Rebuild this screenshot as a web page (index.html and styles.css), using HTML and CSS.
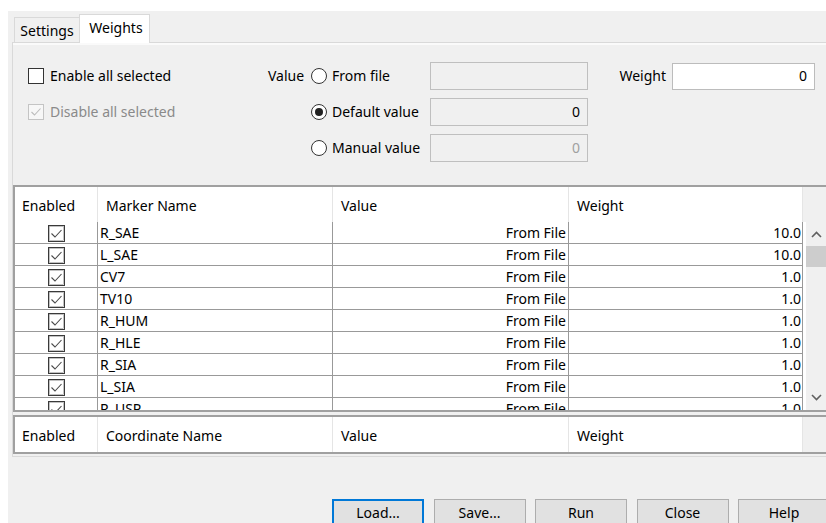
FILE: index.html
```html
<!DOCTYPE html>
<html>
<head>
<meta charset="utf-8">
<title>Weights</title>
<link rel="stylesheet" href="styles.css">
</head>
<body>
<div class="window">
  <div class="tabbar">
    <div class="tab">Settings</div>
    <div class="tab active">Weights</div>
  </div>

  <div class="pane">
    <div class="controls">
      <label class="check">
        <span class="box"></span>
        <span>Enable all selected</span>
      </label>
      <div class="value-label">Value</div>
      <label class="radio"><span class="dot"></span><span>From file</span></label>
      <div class="field disabled"></div>
      <div class="spacer"></div>
      <div class="weight-label">Weight</div>
      <div class="field weight">0</div>

      <label class="check disabled row2">
        <span class="box">
          <svg width="14" height="14" viewBox="0 0 14 14"><polyline points="2.5,7 5.5,10 11.5,3.5" fill="none" stroke="#bcbcbc" stroke-width="1.1"/></svg>
        </span>
        <span>Disable all selected</span>
      </label>
      <label class="radio row2 col3"><span class="dot on"></span><span>Default value</span></label>
      <div class="field row2 col4">0</div>

      <label class="radio row3 col3"><span class="dot"></span><span>Manual value</span></label>
      <div class="field disabled row3 col4">0</div>
    </div>

    <div class="table markers">
      <div class="thead">
        <div class="th c1">Enabled</div>
        <div class="th c2">Marker Name</div>
        <div class="th c3">Value</div>
        <div class="th c4">Weight</div>
        <div class="th fill"></div>
      </div>
      <div class="tbody">
        <div class="rows" id="rows"></div>
        <div class="gutter"></div>
        <div class="vscroll">
          <svg class="arrow" width="21" height="22" viewBox="0 0 21 22"><polyline points="6,15 10.5,10.5 15,15" fill="none" stroke="#606060" stroke-width="1.6"/></svg>
          <div class="thumb"></div>
          <div class="track"></div>
          <svg class="arrow" width="21" height="22" viewBox="0 0 21 22"><polyline points="6,7 10.5,11.5 15,7" fill="none" stroke="#606060" stroke-width="1.6"/></svg>
        </div>
      </div>
    </div>

    <div class="table coords">
      <div class="thead">
        <div class="th c1">Enabled</div>
        <div class="th c2">Coordinate Name</div>
        <div class="th c3">Value</div>
        <div class="th c4">Weight</div>
        <div class="th fill"></div>
      </div>
    </div>
  </div>

  <div class="buttons">
    <button class="btn default">Load...</button>
    <button class="btn">Save...</button>
    <button class="btn">Run</button>
    <button class="btn">Close</button>
    <button class="btn">Help</button>
  </div>
</div>
<script src="app.js"></script>
</body>
</html>
```

FILE: app.js
```js
// Marker rows of the weights table
const markers = [
  ["R_SAE", "10.0"], ["L_SAE", "10.0"], ["CV7", "1.0"], ["TV10", "1.0"],
  ["R_HUM", "1.0"], ["R_HLE", "1.0"], ["R_SIA", "1.0"], ["L_SIA", "1.0"],
  ["R_USP", "1.0"]
];

const tick =
  '<svg width="17" height="17" viewBox="0 0 17 17">' +
  '<rect x="0.5" y="0.5" width="16" height="16" fill="#fff" stroke="#3a3a3a" stroke-width="1"/>' +
  '<rect x="1.5" y="1.5" width="14" height="14" fill="none" stroke="#9a9a9a" stroke-width="0.6"/>' +
  '<polyline points="3.5,8.5 7,12 13.5,5" fill="none" stroke="#4a4a4a" stroke-width="1.1"/>' +
  '</svg>';

const rows = document.getElementById("rows");
rows.innerHTML = markers.map(([name, w]) =>
  '<div class="tr">' +
  '<div class="td c1">' + tick + '</div>' +
  '<div class="td c2">' + name + '</div>' +
  '<div class="td c3 num">From File</div>' +
  '<div class="td c4 num">' + w + '</div>' +
  '</div>'
).join("");
```

FILE: styles.css
```css
* { box-sizing: border-box; }

html, body {
  margin: 0;
  background: #fff;
}

body {
  font-family: "Noto Sans", "Open Sans", sans-serif;
  font-size: 14px;
  color: #000;
}

.window {
  margin: 11px 0 0 8px;
  width: 818px;
  height: 512px;
  background: #f0f0f0;
  overflow: hidden;
}

/* ---- tabs ---- */
.tabbar {
  height: 31px;
  display: flex;
  align-items: flex-end;
  padding-left: 6px;
}

.tab {
  height: 25px;
  width: 66px;
  border: 1px solid #d9d9d9;
  border-bottom: none;
  background: #f0f0f0;
  display: flex;
  align-items: center;
  justify-content: center;
}

.tab.active {
  width: 71px;
  height: 29px;
  margin-left: -1px;
  margin-bottom: -1px;
  background: #fff;
  position: relative;
  z-index: 1;
  padding-left: 3px;
  padding-bottom: 3px;
}

/* ---- tab page ---- */
.pane {
  margin-left: 4px;
  width: 830px;
  height: 415px;
  border: 1px solid #d9d9d9;
  box-shadow: inset 0 2px 0 #fafafa;
  padding: 15px 0 2px 0;
}

.controls {
  display: grid;
  grid-template-columns: 240px 43px 119px 158px 31px 53px 143px;
  grid-template-rows: repeat(3, 36px);
  padding-left: 15px;
  align-items: center;
}

.row2 { grid-row: 2; }
.row3 { grid-row: 3; }
.col3 { grid-column: 3; }
.col4 { grid-column: 4; }
.check.row2 { grid-column: 1; }

.check, .radio {
  display: flex;
  align-items: center;
  white-space: nowrap;
  margin-top: -1px;
}

.check .box {
  width: 16px;
  height: 16px;
  border: 1px solid #333;
  background: #fff;
  margin-right: 6px;
  display: flex;
  align-items: center;
  justify-content: center;
}

.check.disabled { color: #8a8a8a; }
.check.disabled .box {
  border-color: #c4c4c4;
  background: #f7f7f7;
}

.value-label, .weight-label {
  text-align: right;
  padding-right: 7px;
  margin-top: -1px;
}
.weight-label { padding-right: 6px; }

.radio .dot {
  width: 16px;
  height: 16px;
  border-radius: 50%;
  border: 1px solid #333;
  background: #fff;
  margin-right: 5px;
  display: flex;
  align-items: center;
  justify-content: center;
}
.radio .dot.on::after {
  content: "";
  width: 8px;
  height: 8px;
  border-radius: 50%;
  background: #222;
}

.field {
  height: 28px;
  border: 1px solid #bfbfbf;
  background: #f0f0f0;
  text-align: right;
  padding-right: 7px;
  line-height: 25px;
}
.field.disabled { color: #a0a0a0; }
.field.weight {
  height: 27px;
  background: #fff;
  border-color: #bcbcbc;
  line-height: 24px;
}

/* ---- tables ---- */
.table {
  width: 816px;
  border: 2px solid #a0a0a0;
  background: #fff;
}

.markers { margin-top: 19px; }
.coords { margin-top: 3px; }

.thead {
  display: flex;
  height: 35px;
  background: #fff;
}

.th {
  height: 100%;
  border-right: 1px solid #e5e5e5;
  padding-left: 7px;
  padding-top: 1px;
  display: flex;
  align-items: center;
  white-space: nowrap;
}
.th.c2, .th.c3, .th.c4 { padding-left: 8px; }
.th.fill {
  flex: 1;
  border-right: none;
  background: #f0f0f0;
}

.c1 { width: 83px; flex: none; }
.c2 { width: 235px; flex: none; }
.c3 { width: 236px; flex: none; }
.c4 { width: 234px; flex: none; }

.tbody {
  display: flex;
  height: 188px;
  overflow: hidden;
}

.rows {
  width: 788px;
  flex: none;
}

.tr {
  display: flex;
  height: 22px;
}

.td {
  height: 22px;
  border-right: 1px solid #999;
  border-bottom: 1px solid #999;
  display: flex;
  align-items: center;
  padding-left: 2px;
  white-space: nowrap;
}
.td.c1 { justify-content: center; padding-left: 0; padding-top: 1px; }
.td.num { justify-content: flex-end; padding-right: 2px; }
.td.c4 { padding-right: 1px; }

.gutter {
  width: 3px;
  flex: none;
}

.vscroll {
  width: 21px;
  flex: none;
  background: #f0f0f0;
  display: flex;
  flex-direction: column;
}
.vscroll .arrow { display: block; flex: none; }
.vscroll .thumb {
  height: 21px;
  margin-top: 2px;
  background: #cdcdcd;
  flex: none;
}
.vscroll .track { flex: 1; }

/* ---- dialog buttons ---- */
.buttons {
  display: flex;
  gap: 9.5px;
  margin-top: 42px;
  padding-left: 324px;
}

.btn {
  width: 92px;
  height: 28px;
  flex: none;
  font: inherit;
  color: #000;
  background: #e1e1e1;
  border: 1px solid #adadad;
  padding: 0 0 2px 0;
}
.btn.default {
  border: 2px solid #0078d7;
}
```
